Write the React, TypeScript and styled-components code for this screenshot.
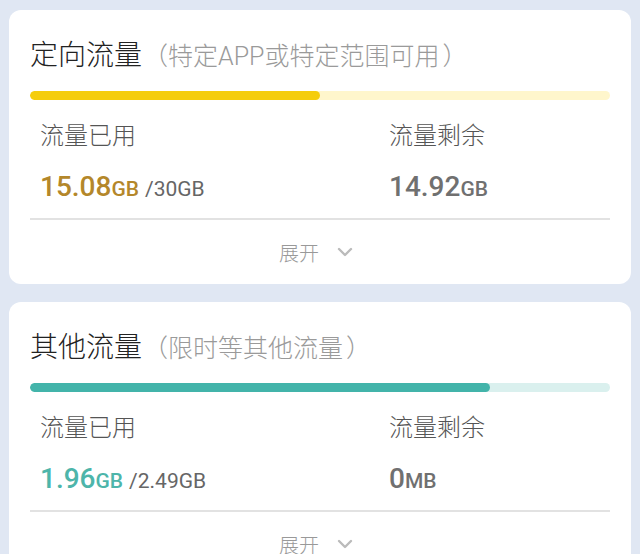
import React, { FC } from "react"
import styled, { createGlobalStyle } from "styled-components"

const GlobalStyle = createGlobalStyle`
  body {
    margin: 0;
    background: #e0e7f3;
    font-family: Roboto, "Noto Sans CJK SC", sans-serif;
  }
`

const Page = styled.div`
  padding: 10px 9px 0;
  display: flex;
  flex-direction: column;
  gap: 18px;
  height: 554px;
  box-sizing: border-box;
  overflow: hidden;
`

const Card = styled.section`
  background: #fff;
  border-radius: 12px;
  padding: 28px 21px 0;
  flex-shrink: 0;
`

const Title = styled.div`
  display: flex;
  align-items: baseline;
  height: 36px;
  line-height: 36px;
  font-size: 28px;
  font-weight: 300;
  color: #222;
`

const Note = styled.span`
  font-size: 25px;
  font-weight: 300;
  color: #9a9a9a;
  margin-left: 1px;
`

const Paren = styled.span`
  margin-left: 3px;
`

const Track = styled.div<{ $bg: string }>`
  margin-top: 17px;
  height: 9px;
  border-radius: 5px;
  background: ${({ $bg }) => $bg};
  overflow: hidden;
`

const Fill = styled.div<{ $color: string }>`
  height: 100%;
  border-radius: 5px;
  background: ${({ $color }) => $color};
`

const Stats = styled.div`
  display: grid;
  grid-template-columns: 349px 1fr;
  padding: 21px 10px 0;
`

const Stat = styled.div`
  display: flex;
  flex-direction: column;
  gap: 18px;
`

const Label = styled.div`
  font-size: 24px;
  font-weight: 300;
  line-height: 30px;
  color: #555;
`

const Value = styled.div<{ $color: string }>`
  display: flex;
  align-items: baseline;
  height: 36px;
  line-height: 36px;
  color: ${({ $color }) => $color};
`

const Num = styled.span`
  font-size: 28px;
  font-weight: 500;
`

const Unit = styled.span`
  font-size: 21px;
  font-weight: 500;
`

const Total = styled.span`
  font-size: 21px;
  font-weight: 400;
  color: #666;
  margin-left: 6px;
`

const Divider = styled.div`
  margin-top: 13px;
  height: 2px;
  background: #e2e2e2;
`

const Expand = styled.div`
  height: 64px;
  display: flex;
  align-items: center;
  justify-content: center;
  gap: 18px;
  font-size: 20px;
  font-weight: 300;
  color: #999;
  padding-right: 8px;
`

const Chevron = () => (
  <svg width="16" height="10" viewBox="0 0 16 10">
    <path d="M2 2l6 6 6-6" fill="none" stroke="#bbb" strokeWidth="2.4" strokeLinecap="round" strokeLinejoin="round" />
  </svg>
)

interface UsageProps {
  title: string
  note: string
  color: string
  valueColor: string
  track: string
  pct: number
  used: string
  usedUnit: string
  total: string
  left: string
  leftUnit: string
}

const UsageCard: FC<UsageProps> = p => (
  <Card>
    <Title>
      {p.title}
      <Note>
        （{p.note}
        <Paren>）</Paren>
      </Note>
    </Title>
    <Track $bg={p.track}>
      <Fill $color={p.color} style={{ width: `${p.pct}%` }} />
    </Track>
    <Stats>
      <Stat>
        <Label>流量已用</Label>
        <Value $color={p.valueColor}>
          <Num>{p.used}</Num>
          <Unit>{p.usedUnit}</Unit>
          <Total>/{p.total}</Total>
        </Value>
      </Stat>
      <Stat>
        <Label>流量剩余</Label>
        <Value $color="#707070">
          <Num>{p.left}</Num>
          <Unit>{p.leftUnit}</Unit>
        </Value>
      </Stat>
    </Stats>
    <Divider />
    <Expand>
      <span>展开</span>
      <Chevron />
    </Expand>
  </Card>
)

const App: FC = () => (
  <>
    <GlobalStyle />
    <Page>
      <UsageCard
        title="定向流量"
        note="特定APP或特定范围可用"
        color="#f5cd0c"
        valueColor="#b4872a"
        track="#fff6cc"
        pct={50}
        used="15.08"
        usedUnit="GB"
        total="30GB"
        left="14.92"
        leftUnit="GB"
      />
      <UsageCard
        title="其他流量"
        note="限时等其他流量"
        color="#43b4aa"
        valueColor="#4db5aa"
        track="#daf0ee"
        pct={79.3}
        used="1.96"
        usedUnit="GB"
        total="2.49GB"
        left="0"
        leftUnit="MB"
      />
    </Page>
  </>
)

export default App
